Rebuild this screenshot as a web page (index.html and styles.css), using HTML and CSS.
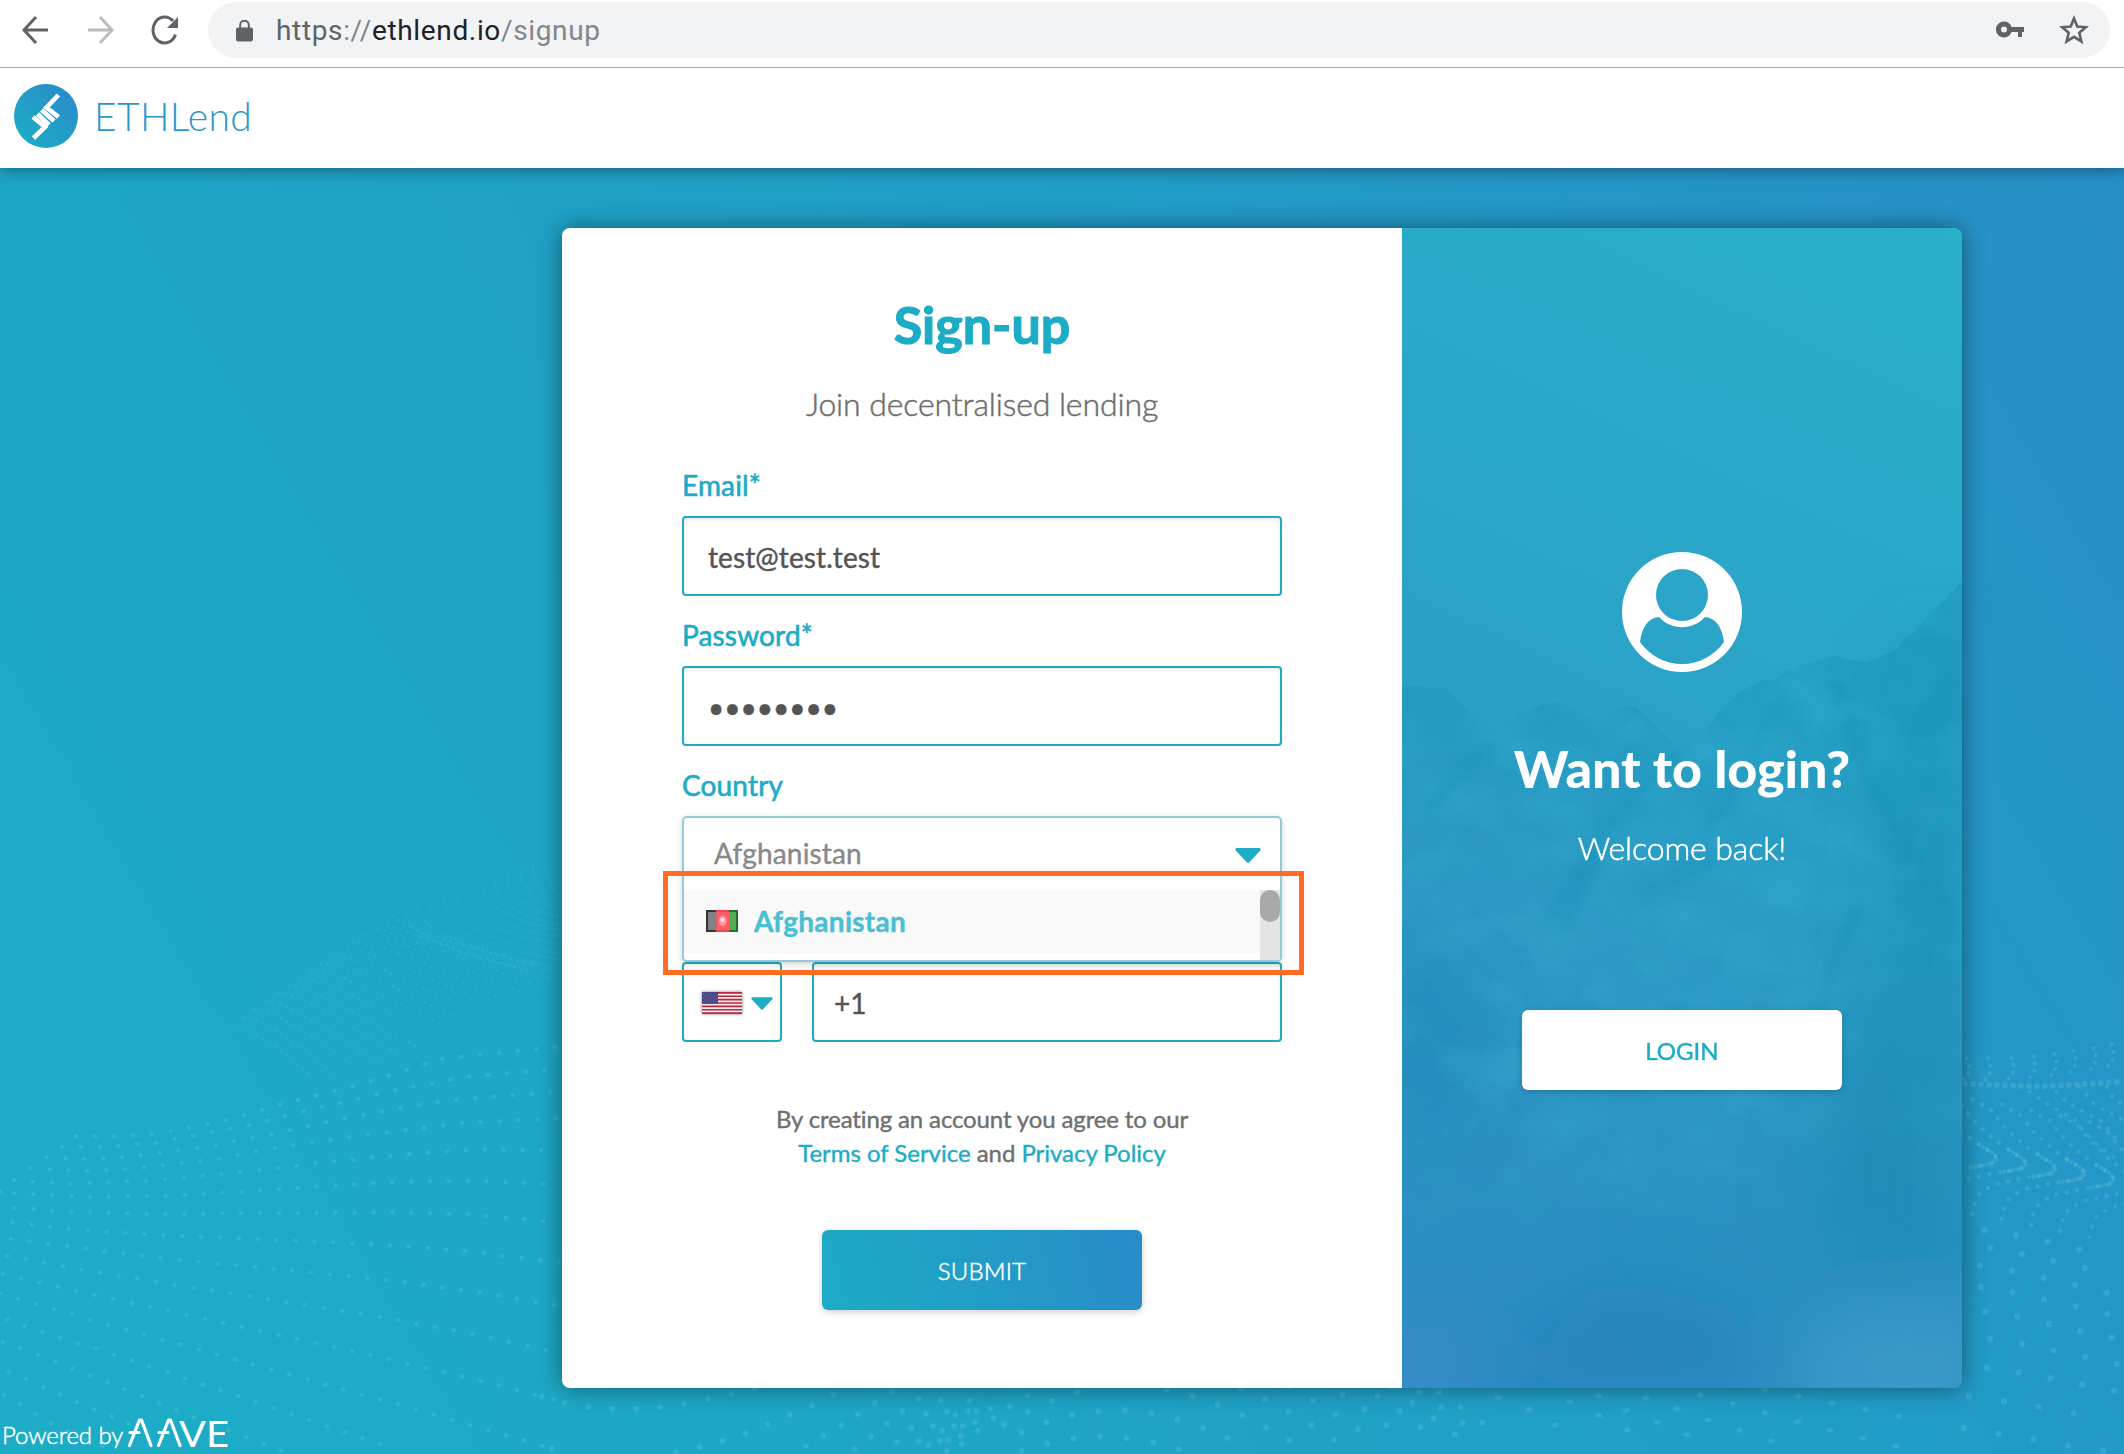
FILE: index.html
```html
<!DOCTYPE html>
<html lang="en">
<head>
<meta charset="utf-8">
<title>ETHLend – Sign-up</title>
<link rel="stylesheet" href="styles.css">
</head>
<body>
<div class="toolbar">
  <svg class="nav-icon" viewBox="0 0 28 32" width="28" height="32"><path d="M26 16H3M14 3 2 16l12 13" fill="none" stroke="#5f6368" stroke-width="3"/></svg>
  <svg class="nav-icon forward" viewBox="0 0 28 32" width="28" height="32"><path d="M1 16h24M13 3l12 13-12 13" fill="none" stroke="#babcbe" stroke-width="3"/></svg>
  <svg class="nav-icon reload" viewBox="0 0 28 32" width="28" height="32"><path d="M24.500 20.500A11.600 13 0 1 1 22 7" fill="none" stroke="#5f6368" stroke-width="3"/><path d="M27 3v11H16z" fill="#5f6368"/></svg>
  <div class="address">
    <svg class="lock" viewBox="0 0 17 22" width="17" height="22"><rect y="7.500" width="17" height="14" rx="2" fill="#5f6368"/><path d="M4.200 9V5a4.300 4.300 0 0 1 8.600 0v4" fill="none" stroke="#5f6368" stroke-width="2"/></svg>
    <div class="url"><span class="scheme">https</span><span class="muted">://</span><span class="host">ethlend.io</span><span class="muted">/signup</span></div>
    <svg class="key" viewBox="0 0 28 17" width="28" height="17"><path fill="#5f6368" fill-rule="evenodd" d="M8 0.500a8 8 0 1 0 7.500 10.500H22v5h4v-5h2V6H15.500A8 8 0 0 0 8 .5zm0 5a3 3 0 1 1 0 6 3 3 0 0 1 0-6z"/></svg>
    <svg class="star" viewBox="0 0 30 30" width="30" height="30"><path d="M15 3.500l3.300 8 8.600.7-6.600 5.600 2.100 8.600L15 21.800l-7.400 4.600 2.100-8.600-6.600-5.600 8.600-.7z" fill="none" stroke="#5f6368" stroke-width="2.600"/></svg>
  </div>
</div>
<header class="header">
  <svg class="brand-mark" viewBox="0 0 64 64" width="64" height="64">
    <defs><linearGradient id="mark" x1="0" y1="1" x2="1" y2="0"><stop offset=".1" stop-color="#1cacc6"/><stop offset=".9" stop-color="#298cc9"/></linearGradient></defs>
    <circle cx="32" cy="32" r="32" fill="url(#mark)"/>
    <g fill="none" stroke="#fff" stroke-width="4.600"><path d="M44.500 11 32.500 23.500l12 9.500"/><path d="M27.500 26 40 37"/><path d="M23.500 30 35 41"/><path d="M19 33 31 43 19.500 54"/></g>
  </svg>
  <span class="brand-name">ETHLend</span>
</header>
<main class="main">
  <svg class="waves" viewBox="0 168 2124 1286" width="2124" height="1286">
    <g class="dots" transform="translate(0 1000) scale(.3636 .3333)" stroke-width="13" stroke-dasharray="0 52">
      <path d="M0 575 40 540 85 545 180 550 282 548 435 540 597 523 757 505 865 490 1080 466 1240 453 1345 448 1540 451"/>
      <path d="M40 580 230 590 385 590 540 583 700 573 865 560 1080 546 1300 542 1540 554"/>
      <path d="M40 622 180 636 430 642 700 640 1080 637 1300 643 1540 668"/>
      <path d="M35 667 220 690 420 705 740 718 1010 732 1280 752 1540 789"/>
      <path d="M30 716 310 757 560 787 820 813 1100 845 1370 886 1540 918"/>
      <path d="M20 768 250 814 490 856 750 900 1015 945 1290 999 1540 1059"/>
      <path d="M8 823 280 890 570 958 820 1018 1090 1083 1370 1155 1545 1205"/>
      <path d="M0 880 260 963 540 1047 790 1122 1060 1203 1340 1290 1515 1345"/>
      <path d="M20 958 100 990 372 1085 610 1172 860 1265 1080 1345"/>
      <path d="M8 1025 260 1132 530 1250 780 1355"/>
      <path d="M25 1115 230 1215 400 1290 530 1350"/>
      <path d="M10 1185 150 1275 300 1350"/>
      <path d="M85 505 225 513 320 510 430 498 600 477 745 445 960 412 1275 369 1540 355"/>
      <path d="M128 472 220 477 320 473 430 460 570 440 750 402 925 360 1100 323 1250 298 1540 275"/>
      <path d="M170 440 310 440 420 430 515 410 675 378 850 330 1075 273 1270 232 1540 205"/>
      <path d="M210 410 350 408 455 397 610 365 780 310 1000 250 1220 175 1540 140"/>
    </g>
    <g class="dots faint" transform="translate(200 820) scale(.3333)" stroke-width="9" stroke-dasharray="0 21">
      <path d="M95 615 C160 625 260 700 330 765"/><path d="M130 592 C200 600 310 690 400 760"/><path d="M165 568 C240 575 360 665 470 745"/><path d="M200 543 C280 550 420 660 540 728"/><path d="M235 518 C320 525 480 640 590 698"/><path d="M268 496 C350 500 520 620 650 680"/><path d="M300 473 C390 480 560 580 700 645"/><path d="M332 450 C420 455 600 550 745 622"/><path d="M362 429 C450 430 640 530 780 600"/><path d="M393 408 C480 410 660 500 820 570"/><path d="M424 384 C510 385 700 480 870 555"/><path d="M455 364 C540 365 740 460 920 540"/><path d="M484 344 C550 345 760 430 970 520"/><path d="M513 323 C570 335 790 420 1010 495"/><path d="M545 305 C590 330 810 400 1050 475"/><path d="M580 287 C610 330 830 390 1080 455"/>
    </g>
    <g class="dots faint" transform="translate(200 820) scale(.3333)" stroke-width="8" stroke-dasharray="0 13">
      <path d="M612 270 C620 340 760 410 1000 450"/><path d="M652 258 C655 320 790 390 1060 440"/><path d="M690 243 C695 310 830 375 1080 420"/><path d="M728 230 C733 300 870 365 1080 400"/><path d="M767 218 C770 290 900 340 1080 375"/><path d="M807 205 C806 270 920 330 1080 350"/><path d="M848 192 C846 260 950 310 1080 330"/><path d="M885 180 C880 240 970 300 1080 312"/><path d="M924 168 C918 230 1000 280 1080 290"/><path d="M962 156 C955 210 1030 260 1080 270"/><path d="M1000 142 C995 190 1040 235 1080 250"/><path d="M1036 130 C1035 170 1060 210 1085 230"/>
    </g>
    <g class="dots" transform="translate(540 1370) scale(.3333)" stroke-width="17" stroke-dasharray="0 72">
      <path d="M5 80 66 97 135 109 207 116 282 117 357 112 432 102 506 87 578 71 650 55"/>
      <path d="M408 246 484 230 557 210 628 186 696 158 761 130 825 102 883 72"/>
      <path d="M35 236 105 250"/>
      <g stroke-dasharray="0 61"><path d="M798 228 858 192 914 158 970 122 1021 88 1072 55"/><path d="M945 237 996 198 1044 159 1092 119 1139 83"/><path d="M1070 216 1115 175 1157 133 1199 94 1240 58"/><path d="M1137 212 1177 170 1217 128 1257 88"/><path d="M1200 212 1241 170 1280 128 1318 86"/><path d="M1225 210 1266 170 1307 127 1348 88"/><path d="M1165 226 1205 183 1242 140 1281 100 1320 58"/><path d="M1220 243 1260 200 1305 158 1348 118 1393 82"/><path d="M1265 221 1314 181 1362 143 1412 107 1465 75"/></g>
    </g>
    <g class="dots" transform="translate(1000 1370) scale(.3333)" stroke-width="18" stroke-dasharray="0 80">
      <path d="M65 242 140 221 216 206 297 200 380 204 463 217 544 240"/>
      <path d="M65 187 130 160 200 138 276 125 356 120 437 127 517 144 596 168 671 199 745 232"/>
      <path d="M13 163 70 131 130 102 195 77 265 58"/>
      <path d="M500 60 578 78 653 104 727 136 797 171 867 210 935 247"/>
      <path d="M722 55 791 86 861 122 927 161 993 203 1058 246"/>
      <path d="M870 50 936 89 1001 129 1065 171 1127 215"/>
      <path d="M1028 74 1089 114 1150 158 1210 202"/>
      <path d="M1133 77 1193 119 1253 164 1312 211"/>
      <path d="M1173 50 1233 95 1292 138 1352 185 1412 231"/>
      <path d="M1258 66 1318 109 1378 153 1440 199"/>
      <path d="M1317 66 1378 109 1441 153 1495 199"/>
    </g>
    <g class="dots" transform="translate(1400 1000) scale(.4617 .3333)" stroke-width="15" stroke-dasharray="0 75">
      <path d="M213 1193 287 1232 336 1275 390 1322"/><path d="M368 1205 425 1243 484 1284 540 1325"/><path d="M430 1187 496 1236 559 1268 622 1305 687 1340"/><path d="M532 1195 596 1225 660 1256 729 1288 797 1320 867 1352"/><path d="M651 1185 720 1210 787 1237 856 1263 928 1289 1000 1314 1074 1339"/><path d="M790 1170 860 1187 930 1207 1001 1226 1073 1246 1147 1267"/>
    </g>
    <g class="dots" transform="translate(1950 1020) scale(.3333)" stroke-width="19" stroke-dasharray="0 97">
      <path d="M103 630 193 645 286 663 380 686 474 709"/><path d="M120 684 211 702 307 722 401 743 497 767"/><path d="M90 737 183 752 279 773 375 795 472 819"/><path d="M92 801 185 817 282 838 379 860 479 884"/><path d="M106 875 203 890 302 913 402 935 503 957"/><path d="M120 956 218 972 320 993 422 1015 522 1036"/><path d="M110 1043 210 1058 315 1077 418 1098 518 1119"/><path stroke-dasharray="0 106" d="M57 1129 158 1143 262 1160 367 1179 475 1198"/><path stroke-dasharray="0 106" d="M41 1224 145 1241 250 1258 358 1277 465 1295"/>
    </g>
    <defs>
      <path id="hook" d="M68 238 126 272 150 306 180 337 210 364 238 386 265 405 295 425 318 445 300 462 250 470 205 478 140 492 112 505 88 523 74 550 67 583"/>
      <path id="bend" d="M265 405C290 420 316 432 316 447 314 460 280 466 250 470"/>
      <path id="crest" d="M115 115 122 143 118 163 100 185"/>
    </defs>
    <g class="dots" transform="translate(1950 1020) scale(.3333)" stroke-width="13" stroke-dasharray="0 32">
      <use href="#hook" x="-176" y="-30"/><use href="#hook" x="-88" y="-15"/><use href="#hook"/><use href="#hook" x="88" y="15"/><use href="#hook" x="176" y="32"/><use href="#hook" x="264" y="50"/><use href="#hook" x="352" y="68"/>
      <g stroke-dasharray="0 14"><use href="#bend" x="-176" y="-30"/><use href="#bend" x="-88" y="-15"/><use href="#bend"/><use href="#bend" x="88" y="15"/><use href="#bend" x="176" y="32"/></g>
      <path d="M240 215 268 237 308 262 372 297 398 330 430 362 463 390 497 415"/><path d="M320 215 348 243 388 268 455 303 481 338 510 370"/><path d="M390 200 430 250 473 277 522 300"/><path d="M470 200 490 237 520 255"/>
      <g stroke-dasharray="0 23"><use href="#crest" x="-64"/><use href="#crest"/><use href="#crest" x="70" y="-2"/><use href="#crest" x="135" y="-7"/><use href="#crest" x="198" y="-13"/><use href="#crest" x="256" y="-22"/><use href="#crest" x="316" y="-31"/><use href="#crest" x="370" y="-41"/></g>
      <path stroke-dasharray="0 24" stroke-width="18" d="M45 192 280 200 522 185"/>
    </g>
  </svg>
  <section class="card">
    <div class="signup">
      <h1 class="title">Sign-up</h1>
      <p class="subtitle">Join decentralised lending</p>
      <div class="form">
        <div class="field"><label class="label">Email*</label><div class="input">test@test.test</div></div>
        <div class="field"><label class="label">Password*</label><div class="input password">••••••••</div></div>
        <div class="field country"><label class="label">Country</label>
          <div class="select">
            <div class="select-value"><span>Afghanistan</span><svg viewBox="0 0 26 15" width="26" height="15"><path d="M2 0h22a1.500 1.500 0 0 1 1.200 2.500L14.500 14a2 2 0 0 1-3 0L.8 2.500A1.500 1.500 0 0 1 2 0z" fill="#1cacc6"/></svg></div>
            <div class="options">
              <div class="option">
                <svg class="flag-af" viewBox="0 0 32 22" width="32" height="22"><path d="M0 0h11v22H0z" fill="#333"/><path d="M10 0h13v22H10z" fill="#f04654"/><path d="M23 0h9v22h-9z" fill="#24702a"/><path d="M2 2h8.500v18H2z" fill="#828282"/><path d="M23 2h7v18h-7z" fill="#52ad55"/><path d="M10.500 2H23v18H10.500z" fill="#ff5b68"/><ellipse cx="16.500" cy="11" rx="4" ry="5" fill="#ff9ca4"/><circle cx="16.500" cy="10" r="2" fill="#ffe3e5"/></svg>
                <span>Afghanistan</span>
              </div>
              <div class="scrollbar"><div class="thumb"></div></div>
            </div>
            <div class="highlight"></div>
          </div>
        </div>
        <div class="phone">
          <div class="dial">
            <svg class="flag-us" viewBox="0 0 40 22" width="40" height="22"><path fill="#f6e9ec" d="M0 0h40v22H0z"/><path d="M0 .85h40M0 4.230h40M0 7.610h40M0 11h40M0 14.380h40M0 17.760h40M0 21.150h40" stroke="#b8283f" stroke-width="1.700"/><path fill="#474580" d="M0 0h16v11.800H0z"/><path d="M1 2h15M2 4h14M1 6h15M2 8h14M1 10h15" stroke="#8583ad" stroke-width=".8" stroke-dasharray="1 1.500"/></svg>
            <svg viewBox="0 0 26 15" width="22" height="13"><path d="M2 0h22a1.500 1.500 0 0 1 1.200 2.500L14.500 14a2 2 0 0 1-3 0L.8 2.500A1.500 1.500 0 0 1 2 0z" fill="#1cacc6"/></svg>
          </div>
          <div class="input number">+1</div>
        </div>
      </div>
      <p class="terms">By creating an account you agree to our<br><span class="links"><a>Terms of Service</a> and <a>Privacy Policy</a></span></p>
      <div class="button submit">SUBMIT</div>
    </div>
    <aside class="login">
      <svg class="mountains" viewBox="0 0 560 1160" width="560" height="1160">
        <defs>
          <linearGradient id="rock" x1="0" y1="0" x2="0" y2="1"><stop offset="0" stop-color="#0b86ac" stop-opacity=".34"/><stop offset=".15" stop-color="#0f88b0" stop-opacity=".26"/><stop offset=".4" stop-color="#1690b8" stop-opacity=".12"/><stop offset="1" stop-color="#0b7ab0" stop-opacity=".14"/></linearGradient>
          <linearGradient id="fade" x1="0" y1="0" x2="0" y2="1"><stop offset="0" stop-color="#fff"/><stop offset=".6" stop-color="#fff" stop-opacity=".8"/><stop offset=".85" stop-color="#fff" stop-opacity="0"/></linearGradient>
          <filter id="grain" x="0" y="0" width="1" height="1"><feTurbulence type="fractalNoise" baseFrequency=".016 .022" numOctaves="6" seed="21"/><feColorMatrix values="0 0 0 0 .04  0 0 0 0 .44  0 0 0 0 .64  2.200 0 0 0 -.85"/><feComposite in2="SourceGraphic" operator="in"/></filter>
          <filter id="haze" x="-50%" y="-50%" width="200%" height="200%"><feGaussianBlur stdDeviation="35"/></filter>
          <filter id="soft" x="-20%" y="-20%" width="140%" height="140%"><feGaussianBlur stdDeviation="6"/></filter>
          <path id="ridge" d="M0 458 15 457 25 460 45 460 59 475 75 494 91 506 108 492 120 482 124 484 140 476 156 474 178 481 199 488 215 480 234 478 255 500 278 519 296 514 310 494 322 478 340 463 358 453 376 451 384 442 394 443 400 436 412 435 433 427 442 431 452 432 464 435 476 430 496 420 502 412 514 402 527 386 543 372 560 353V1160H0z"/>
        </defs>
        <use href="#ridge" fill="url(#rock)"/>
        <use href="#ridge" fill="url(#fade)" filter="url(#grain)" opacity=".42"/>
        <g filter="url(#soft)" fill="none" stroke="#0f7fa8" stroke-opacity=".22" stroke-width="9"><path d="M278 525 240 560 200 600 150 690"/><path d="M380 470 350 520 300 610"/><path d="M430 450 470 560 500 610 555 700"/><path d="M205 610 180 660 160 700"/><path d="M240 668 290 640 330 625"/><path d="M455 680 430 740 400 830"/><path d="M20 590 60 540 90 515"/></g>
        <g filter="url(#haze)"><path d="M500 430 560 400V1050H440L400 960 470 780z" fill="#07799c" opacity=".26"/><path d="M0 700 70 760 40 900 0 920z" fill="#0c6fa5" opacity=".3"/><path d="M100 1160 200 1050 330 1080 370 1160z" fill="#1676b0" opacity=".35"/><ellipse cx="20" cy="1140" rx="50" ry="60" fill="#4291cd" opacity=".6"/><ellipse cx="500" cy="1150" rx="110" ry="70" fill="#4aa3cf" opacity=".5"/></g>
      </svg>
      <svg class="avatar" viewBox="0 0 120 120" width="120" height="120"><path fill="#fff" fill-rule="evenodd" d="M60 0a60 60 0 1 0 0 120A60 60 0 0 0 60 0zM60 17a26 26 0 1 1 0 52 26 26 0 0 1 0-52zM37 65c12 13.500 34 13.500 46 0 11 1 17 10 19 25C92 104 77 112 60 112S28 104 18 90c2-15 8-24 19-25z"/></svg>
      <h2 class="login-title">Want to login?</h2>
      <p class="login-text">Welcome back!</p>
      <div class="button login-button">LOGIN</div>
    </aside>
  </section>
  <footer class="footer">
    <span class="powered">Powered by</span>
    <svg viewBox="0 -4 112 40" width="112" height="40"><g fill="none" stroke="#fff" stroke-width="3.200" stroke-linecap="round" stroke-linejoin="round"><path d="M2.500 27.500 12.500 2h2L24 27.500M3 14.500h9"/><path d="M31.500 27.500 41.500 2h2L53 27.500M32 14.500h9"/></g><text class="ve" x="52" y="28.500" textLength="50" lengthAdjust="spacingAndGlyphs">VE</text></svg>
  </footer>
</main>
</body>
</html>
```

FILE: styles.css
```css
* { box-sizing: border-box; }
body { margin: 0; width: 2124px; height: 1454px; overflow: hidden; background: #fff; font-family: Lato, "Liberation Sans", sans-serif; color: #6f6f6f; }
svg { display: block; flex: none; }
h1, h2, p { margin: 0; }

.toolbar { height: 68px; position: relative; z-index: 2; background: #fff; border-bottom: 1px solid #b0b2b4; display: flex; align-items: flex-start; padding: 2px 14px 0 22px; }
.nav-icon { margin-top: 12px; }
.forward { margin-left: 37px; }
.reload { margin-left: 36px; }
.address { width: 1902px; flex: none; margin-left: auto; height: 56px; border-radius: 28px; background: #f1f3f4; display: flex; align-items: center; padding: 0 21px 0 28px; }
.lock { margin-top: 1px; }
.url { margin-left: 23px; flex: 1; font: 28px/57px Roboto, "Liberation Sans", sans-serif; letter-spacing: .65px; }
.scheme { color: #5f6368; }
.muted { color: #80868b; }
.host { color: #202124; }
.key { margin-right: 35px; margin-bottom: 1px; }

.header { height: 100px; display: flex; align-items: center; padding: 0 0 4px 14px; position: relative; z-index: 1; background: #fff; box-shadow: 0 0 16px rgba(0, 0, 0, .5); }
.brand-name { margin-left: 16px; font-size: 39px; font-weight: 300; line-height: 48px; letter-spacing: .35px; color: #2b96cc; }

.main { position: relative; height: 1286px; padding-top: 60px; background: linear-gradient(59deg, #1cacc6 8%, #219dc7 62%, #2790c7 100%); }
.waves { position: absolute; left: 0; top: 0; }
.dots { fill: none; stroke: #7fd0e4; stroke-opacity: .22; stroke-linecap: round; stroke-linejoin: round; }
.faint { stroke-opacity: .12; }

.card { position: relative; margin-left: 562px; width: 1400px; height: 1160px; display: flex; border-radius: 8px; overflow: hidden; box-shadow: 0 0 24px rgba(0, 0, 0, .45); }
.signup { width: 840px; background: #fff; padding: 65px 120px 0; text-align: center; }
.title { font-size: 52px; line-height: 62px; font-weight: 700; color: #1cacc6; -webkit-text-stroke: 1.2px #1cacc6; }
.subtitle { margin-top: 30px; font-size: 32px; line-height: 38px; font-weight: 300; letter-spacing: -.12px; -webkit-text-stroke: .5px; }
.form { margin-top: 45px; text-align: left; display: flex; flex-direction: column; gap: 22px; }
.field { display: flex; flex-direction: column; gap: 14px; }
.label { font-size: 28px; line-height: 34px; letter-spacing: .15px; color: #1cacc6; -webkit-text-stroke: .6px #1cacc6; }
.input { height: 80px; border: 2px solid #1cacc6; border-radius: 4px; background: #fff; padding: 1px 24px 0; font-size: 28px; line-height: 76px; color: #545454; letter-spacing: .1px; -webkit-text-stroke: .4px; box-shadow: inset 0 2px 4px rgba(0, 0, 0, .08); }
.password { letter-spacing: 0; }
.select { height: 146px; position: relative; z-index: 1; border: 2px solid #96c8da; border-radius: 5px; background: #fff; box-shadow: 0 2px 6px rgba(34, 36, 38, .2); color: #888; font-size: 28px; }
.select-value { height: 72px; padding: 0 19px 2px 30px; display: flex; justify-content: space-between; align-items: center; line-height: 34px; letter-spacing: .15px; -webkit-text-stroke: .4px; }
.select-value svg { margin-top: 5px; }
.options { height: 70px; display: flex; }
.option { flex: 1; height: 63px; background: #f9f9f9; display: flex; align-items: center; padding: 0 0 2px 22px; gap: 16px; font-weight: 700; color: #49bfd3; line-height: 34px; letter-spacing: .25px; -webkit-text-stroke: .4px; }
.flag-af { margin-top: 1px; }
.scrollbar { width: 20px; background: #e4e4e4; }
.thumb { height: 32px; border-radius: 10px; background: #a9a9a9; }
.highlight { position: absolute; left: -21px; top: 53px; width: 641px; height: 104px; border: 5px solid #ff6b20; }
.country { margin-bottom: -22px; }
.phone { display: flex; gap: 30px; }
.dial { width: 100px; height: 80px; border: 2px solid #1cacc6; border-radius: 4px; display: flex; align-items: center; padding: 2px 0 0 18px; gap: 9px; }
.flag-us { box-shadow: 0 0 3px rgba(0, 0, 0, .5); }
.number { flex: 1; padding: 1px 20px 0; }
.terms { margin-top: 60px; font-size: 24px; line-height: 34px; letter-spacing: -.13px; -webkit-text-stroke: .4px; }
.links { letter-spacing: -.03px; }
.terms a { color: #1cacc6; }
.button { width: 320px; height: 80px; border-radius: 6px; font-size: 24px; line-height: 82px; text-align: center; box-shadow: 0 2px 6px rgba(0, 0, 0, .2); }
.submit { margin: 60px auto 0; background: linear-gradient(75deg, #1cacc6, #298cc8); color: #fff; font-weight: 300; letter-spacing: .2px; -webkit-text-stroke: .5px; }

.login { position: relative; width: 560px; padding-top: 324px; display: flex; flex-direction: column; align-items: center; color: #fff; background: linear-gradient(205deg, #28b0c7 0%, #2ba4c8 38%, #2e99c6 65%, #318cc5 100%); }
.mountains { position: absolute; left: 0; top: 0; }
.avatar, .login-title, .login-text, .login-button { position: relative; }
.login-title { margin-top: 65px; font-size: 52px; line-height: 62px; font-weight: 900; letter-spacing: -.1px; }
.login-text { margin-top: 30px; font-size: 32px; line-height: 38px; font-weight: 300; letter-spacing: -.1px; -webkit-text-stroke: .5px; }
.login-button { margin-top: 143px; background: #fff; color: #1cacc6; -webkit-text-stroke: .4px; }

.footer { position: relative; margin-top: 30px; padding-left: 2px; display: flex; align-items: flex-start; gap: 4px; color: #fff; font-size: 24px; line-height: 34px; font-weight: 300; white-space: nowrap; }
.powered { letter-spacing: -.1px; -webkit-text-stroke: .5px; }
.footer svg { margin-top: -4px; overflow: visible; }
.ve { font-size: 37px; fill: #fff; font-weight: 400; }
```
